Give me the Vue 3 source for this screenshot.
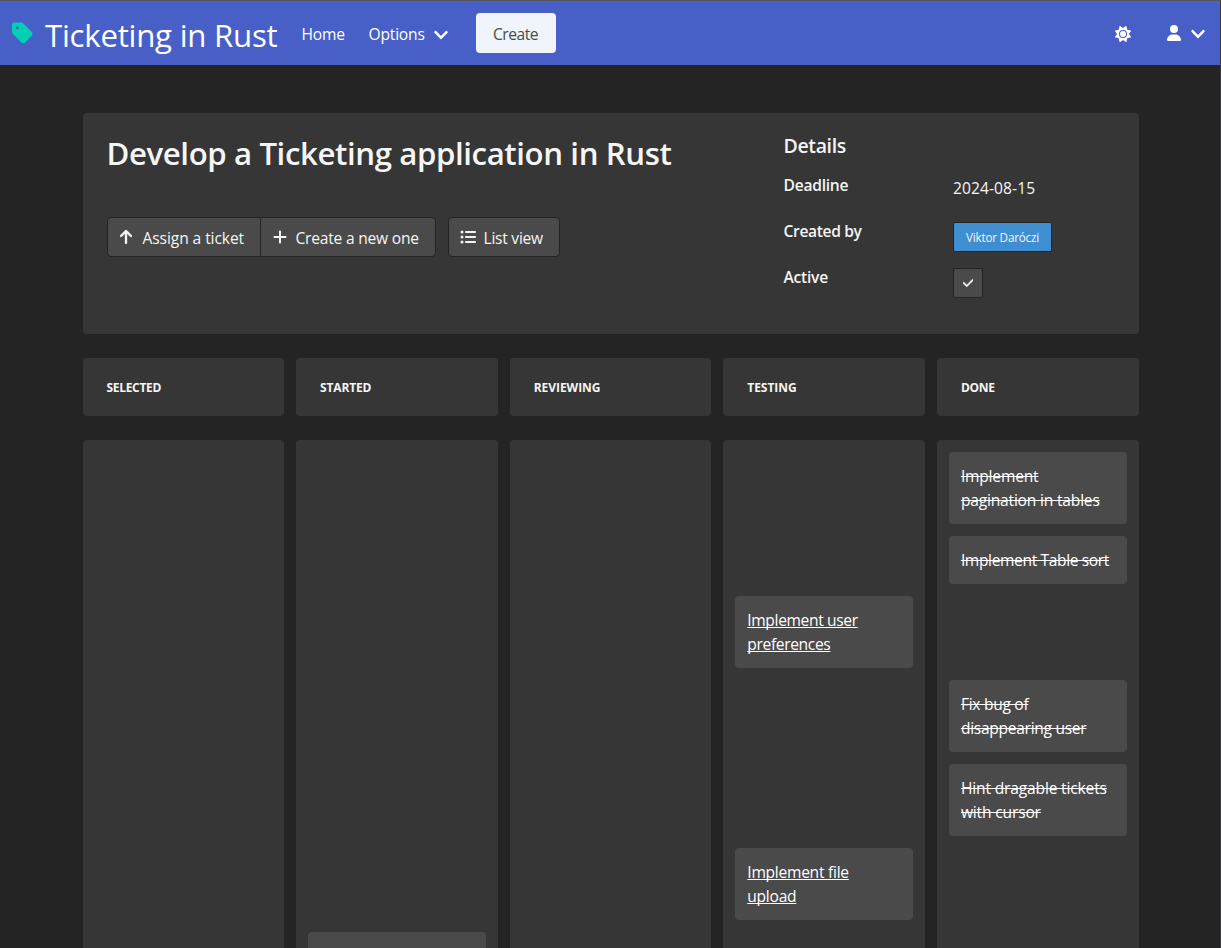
<script setup>
const ICONS = {
  tag: { w: 448, d: 'M0 80V229.5c0 17 6.7 33.3 18.7 45.3l176 176c25 25 65.5 25 90.5 0L418.7 317.3c25-25 25-65.5 0-90.5l-176-176c-12-12-28.3-18.7-45.3-18.7H48C21.5 32 0 53.5 0 80zm112 32a32 32 0 1 1 0 64 32 32 0 1 1 0-64z' },
  chevron: { w: 448, d: 'M207.029 381.476L12.686 187.132c-9.373-9.373-9.373-24.569 0-33.941l22.667-22.667c9.357-9.357 24.522-9.375 33.901-.04L224 284.505l154.745-154.021c9.379-9.335 24.544-9.317 33.901.04l22.667 22.667c9.373 9.373 9.373 24.569 0 33.941L240.971 381.476c-9.373 9.372-24.569 9.372-33.942 0z' },
  sun: { w: 512, d: 'M361.5 1.2c5 2.1 8.6 6.6 9.6 11.9L391 121l107.9 19.8c5.3 1 9.8 4.6 11.9 9.6s1.5 10.7-1.6 15.2L446.9 256l62.3 90.3c3.1 4.5 3.7 10.2 1.6 15.2s-6.6 8.6-11.9 9.6L391 391 371.1 498.9c-1 5.3-4.6 9.8-9.6 11.9s-10.7 1.5-15.2-1.6L256 446.9l-90.3 62.3c-4.5 3.1-10.2 3.7-15.2 1.6s-8.6-6.6-9.6-11.9L121 391 13.1 371.1c-5.3-1-9.8-4.6-11.9-9.6s-1.5-10.7 1.6-15.2L65.1 256 2.8 165.7c-3.1-4.5-3.7-10.2-1.6-15.2s6.6-8.6 11.9-9.6L121 121 140.9 13.1c1-5.3 4.6-9.8 9.6-11.9s10.7-1.5 15.2 1.6L256 65.1 346.3 2.8c4.5-3.1 10.2-3.7 15.2-1.6zM160 256a96 96 0 1 1 192 0 96 96 0 1 1 -192 0zm224 0a128 128 0 1 0 -256 0 128 128 0 1 0 256 0z' },
  user: { w: 448, d: 'M224 256A128 128 0 1 0 224 0a128 128 0 1 0 0 256zm-45.7 48C79.8 304 0 383.8 0 482.3C0 498.7 13.3 512 29.7 512H418.3c16.4 0 29.7-13.3 29.7-29.7C448 383.8 368.2 304 269.7 304H178.3z' },
  up: { w: 384, d: 'M214.6 41.4c-12.5-12.5-32.8-12.5-45.3 0l-160 160c-12.5 12.5-12.5 32.8 0 45.3s32.8 12.5 45.3 0L160 141.2V448c0 17.7 14.3 32 32 32s32-14.3 32-32V141.2L329.4 246.6c12.5 12.5 32.8 12.5 45.3 0s12.5-32.8 0-45.3l-160-160z' },
  plus: { w: 448, d: 'M256 80c0-17.7-14.3-32-32-32s-32 14.3-32 32V224H48c-17.7 0-32 14.3-32 32s14.3 32 32 32H192V432c0 17.7 14.3 32 32 32s32-14.3 32-32V288H400c17.7 0 32-14.3 32-32s-14.3-32-32-32H256V80z' },
  list: { w: 512, d: 'M64 144a48 48 0 1 0 0-96 48 48 0 1 0 0 96zM192 64c-17.7 0-32 14.3-32 32s14.3 32 32 32H480c17.7 0 32-14.3 32-32s-14.3-32-32-32H192zm0 160c-17.7 0-32 14.3-32 32s14.3 32 32 32H480c17.7 0 32-14.3 32-32s-14.3-32-32-32H192zm0 160c-17.7 0-32 14.3-32 32s14.3 32 32 32H480c17.7 0 32-14.3 32-32s-14.3-32-32-32H192zM64 464a48 48 0 1 0 0-96 48 48 0 1 0 0 96zm48-208a48 48 0 1 0 -96 0 48 48 0 1 0 96 0z' },
  check: { w: 448, d: 'M438.6 105.4c12.5 12.5 12.5 32.8 0 45.3l-256 256c-12.5 12.5-32.8 12.5-45.3 0l-128-128c-12.5-12.5-12.5-32.8 0-45.3s32.8-12.5 45.3 0L160 338.7 393.4 105.4c12.5-12.5 32.8-12.5 45.3 0z' },
}
const box = (name) => `0 0 ${ICONS[name].w} 512`

// row: the ticket's place in the shared priority order; spacing: letter spacing in px
const columns = [
  { name: 'Selected', spacing: -0.32, tickets: [] },
  { name: 'Started', spacing: -0.16, tickets: [{ row: 7, title: '', spacing: 0 }] },
  { name: 'Reviewing', spacing: -0.04, tickets: [] },
  {
    name: 'Testing',
    spacing: -0.06,
    tickets: [
      { row: 3, title: 'Implement user preferences', spacing: -0.36 },
      { row: 6, title: 'Implement file upload', spacing: -0.27 },
    ],
  },
  {
    name: 'Done',
    spacing: -0.3,
    done: true,
    tickets: [
      { row: 1, title: 'Implement pagination in tables', spacing: -0.2 },
      { row: 2, title: 'Implement Table sort', spacing: -0.38 },
      { row: 4, title: 'Fix bug of disappearing user', spacing: -0.3 },
      { row: 5, title: 'Hint dragable tickets with cursor', spacing: -0.17 },
    ],
  },
]
</script>

<template>
  <div class="page">
    <nav class="navbar">
      <a class="brand">
        <svg class="icon tag" :viewBox="box('tag')"><path :d="ICONS.tag.d" /></svg>
        <span>Ticketing in Rust</span>
      </a>
      <a class="home">Home</a>
      <a class="options">
        <span>Options</span>
        <svg class="icon" :viewBox="box('chevron')"><path :d="ICONS.chevron.d" /></svg>
      </a>
      <button class="create">Create</button>
      <div class="nav-end">
        <svg class="icon sun" :viewBox="box('sun')"><path :d="ICONS.sun.d" /></svg>
        <svg class="icon user" :viewBox="box('user')"><path :d="ICONS.user.d" /></svg>
        <svg class="icon" :viewBox="box('chevron')"><path :d="ICONS.chevron.d" /></svg>
      </div>
    </nav>

    <main class="container">
      <section class="box summary">
        <div class="overview">
          <h1>Develop a Ticketing application in Rust</h1>
          <div class="actions">
            <div class="joined">
              <button class="button assign">
                <svg class="icon" :viewBox="box('up')"><path :d="ICONS.up.d" /></svg>
                <span>Assign a ticket</span>
              </button>
              <button class="button new">
                <svg class="icon" :viewBox="box('plus')"><path :d="ICONS.plus.d" /></svg>
                <span>Create a new one</span>
              </button>
            </div>
            <button class="button view">
              <svg class="icon" :viewBox="box('list')"><path :d="ICONS.list.d" /></svg>
              <span>List view</span>
            </button>
          </div>
        </div>
        <div class="details">
          <h2>Details</h2>
          <dl>
            <dt>Deadline</dt>
            <dd class="date">2024-08-15</dd>
            <dt class="by">Created by</dt>
            <dd><span class="chip person">Viktor Daróczi</span></dd>
            <dt>Active</dt>
            <dd>
              <span class="chip tick"><svg class="icon" :viewBox="box('check')"><path :d="ICONS.check.d" /></svg></span>
            </dd>
          </dl>
        </div>
      </section>

      <section class="heads">
        <h3 v-for="c in columns" :key="c.name" class="box" :style="{ letterSpacing: c.spacing + 'px' }">{{ c.name }}</h3>
      </section>

      <section class="board">
        <div v-for="c in columns" :key="c.name" class="box lane" :class="{ done: c.done }">
          <a
            v-for="t in c.tickets"
            :key="t.row"
            class="ticket"
            :style="{ gridRow: t.row, letterSpacing: t.spacing + 'px' }"
          >{{ t.title }}</a>
        </div>
      </section>
    </main>
  </div>
</template>

<style>
body {
  background: #242424;
  overflow: hidden;
}
</style>

<style scoped>
* {
  box-sizing: border-box;
}
.page {
  position: relative;
  height: 948px;
  overflow: hidden;
  border-top: 1px solid #55555a;
  background: #242424;
  color: #f5f5f5;
  font: 15.6px/24px 'Open Sans', 'Noto Sans', sans-serif;
}
.page::after {
  content: '';
  position: absolute;
  top: 0;
  right: 0;
  bottom: 0;
  width: 1px;
  background: #3a3a3d;
}
h1, h2, h3, dl, dd {
  margin: 0;
}
button {
  font: inherit;
  color: inherit;
  margin: 0;
}
.icon {
  flex: none;
  display: block;
  height: 16px;
  fill: currentColor;
}
.navbar {
  display: flex;
  align-items: center;
  height: 64px;
  padding: 0 16px 0 12px;
  background: #485fc7;
  color: #fff;
}
.brand {
  display: flex;
  align-items: center;
  font-size: 31.2px;
  line-height: 48px;
  letter-spacing: -0.24px;
}
.brand span {
  margin: 4px 0 0 12px;
  white-space: nowrap;
  width: 256.5px;
}
.tag {
  width: 21px;
  height: 24px;
  color: #00d1b2;
}
.home,
.options {
  padding-top: 2px;
  letter-spacing: -0.2px;
}
.home {
  width: 67px;
}
.options {
  display: flex;
  align-items: center;
  width: 107px;
}
.options span {
  width: 65px;
}
.options .icon {
  margin-top: 1px;
}
.create {
  height: 40px;
  width: 80px;
  padding: 2px 0 0;
  border: 0;
  border-radius: 4px;
  background: #eff5fb;
  color: #4a4a4a;
  letter-spacing: -0.5px;
}
.nav-end {
  display: flex;
  align-items: center;
  margin-left: auto;
  padding-top: 2px;
}
.sun {
  margin-right: 36px;
}
.user {
  margin: -2px 10px 0 0;
}
.container {
  width: 1056px;
  margin: 48px auto 0;
}
.box {
  background: #363636;
  border-radius: 4px;
}
.summary {
  display: flex;
  height: 221px;
  padding: 20px 24px;
}
.overview {
  width: 677px;
}
h1 {
  padding-top: 2px;
  font-size: 31.2px;
  line-height: 36px;
  font-weight: 600;
  letter-spacing: -0.4px;
}
.actions {
  display: flex;
  gap: 12px;
  margin-top: 46px;
}
.joined {
  display: flex;
}
.button {
  display: flex;
  align-items: center;
  height: 40px;
  padding: 0 0 0 12px;
  border: 1px solid #242424;
  border-radius: 4px;
  background: #4a4a4a;
  white-space: nowrap;
}
.button span {
  padding-top: 2px;
}
.button .icon {
  margin-right: 9px;
}
.assign {
  width: 154px;
  border-radius: 4px 0 0 4px;
  letter-spacing: -0.09px;
}
.assign .icon {
  margin-right: 11px;
  stroke: currentColor;
  stroke-width: 12px;
}
.new {
  width: 176px;
  margin-left: -1px;
  border-radius: 0 4px 4px 0;
  letter-spacing: -0.22px;
}
.view {
  width: 112px;
  padding-left: 11px;
  letter-spacing: -0.25px;
}
.view .icon {
  margin-right: 8px;
}
h2 {
  font-size: 19.5px;
  line-height: 26px;
  font-weight: 600;
  letter-spacing: -0.36px;
}
dl {
  display: grid;
  grid-template-columns: 169.5px auto;
  grid-template-rows: repeat(3, 46px);
  margin-top: 14px;
}
dt {
  font-weight: 600;
  letter-spacing: -0.25px;
}
.by {
  letter-spacing: -0.36px;
}
dd {
  padding-top: 3px;
}
.date {
  letter-spacing: 0.08px;
}
.chip {
  display: flex;
  align-items: center;
  justify-content: center;
  width: 30px;
  height: 30px;
  border: 1px solid #242424;
  border-radius: 2px;
  background: #4a4a4a;
}
.person {
  width: 99px;
  background: #3e8ed0;
  font-size: 11.7px;
  letter-spacing: -0.22px;
}
.tick .icon {
  height: 12px;
  stroke: currentColor;
  stroke-width: 20px;
}
.heads,
.board {
  display: grid;
  grid-template-columns: repeat(5, 1fr);
  gap: 12px;
  margin-top: 24px;
}
h3 {
  height: 58px;
  padding-left: 24px;
  font-size: 12px;
  line-height: 59px;
  font-weight: 700;
  text-transform: uppercase;
}
.lane {
  display: grid;
  grid-template-rows: 72px 48px repeat(5, 72px);
  gap: 12px;
  padding: 12px;
}
.ticket {
  padding: 12px;
  border-radius: 4px;
  background: #4a4a4a;
  color: #fff;
  text-decoration: underline 1px;
  text-decoration-skip-ink: none;
  text-underline-offset: 1px;
}
.done .ticket {
  text-decoration: line-through 1px;
}
</style>
